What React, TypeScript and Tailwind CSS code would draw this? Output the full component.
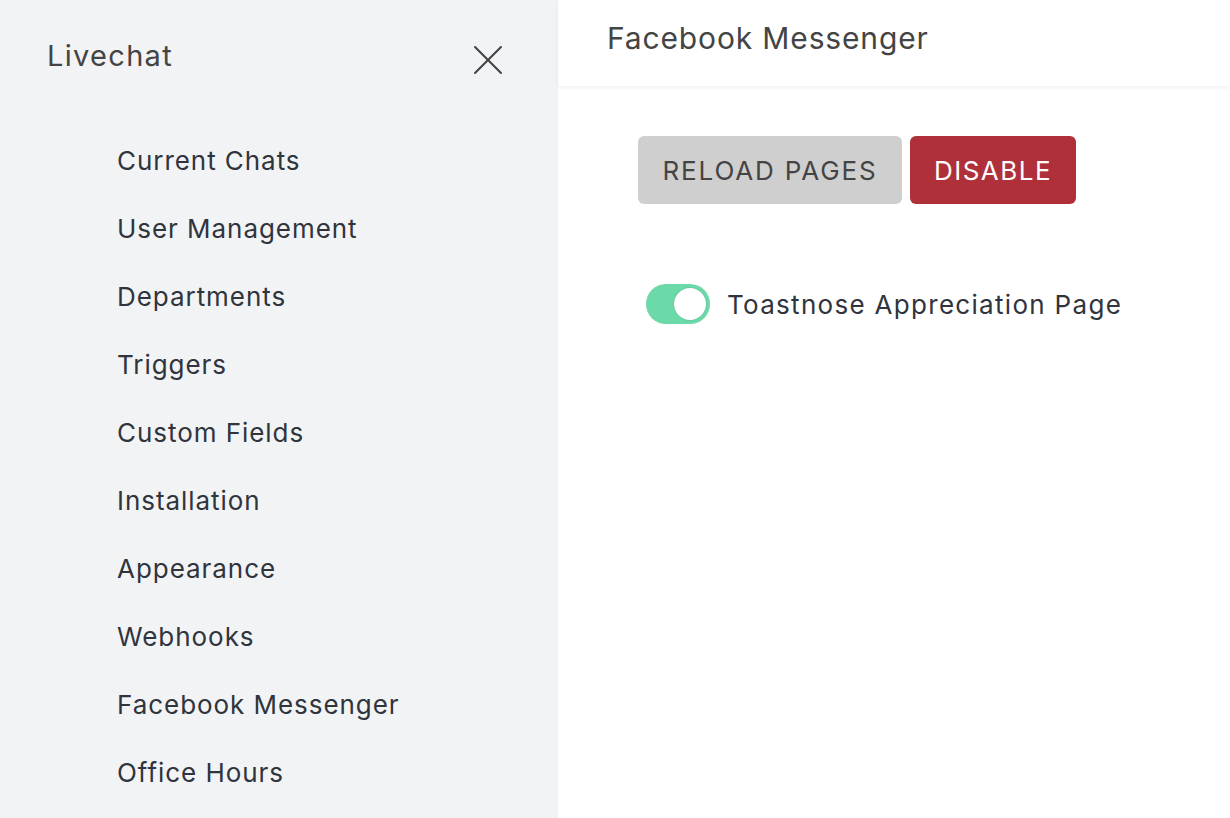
import { X } from 'lucide-react'

const menuItems = [
  'Current Chats',
  'User Management',
  'Departments',
  'Triggers',
  'Custom Fields',
  'Installation',
  'Appearance',
  'Webhooks',
  'Facebook Messenger',
  'Office Hours'
]

export default function App() {
  return (
    <div
      className="flex h-[818px] w-[1230px] overflow-hidden bg-white"
      style={{ fontFamily: 'Inter, "Noto Sans", sans-serif' }}
    >
      {/* SIDEBAR */}
      <aside className="flex w-[558px] shrink-0 flex-col bg-[#f2f3f5]">
        <div className="flex h-[112px] items-center justify-between pl-[47px] pr-[44px]">
          <span className="text-[29px] tracking-[1.3px] text-[#444444]">
            Livechat
          </span>
          <X
            className="mt-[8px] h-[52px] w-[52px] text-[#444444]"
            strokeWidth={0.95}
          />
        </div>

        <nav className="flex flex-col pt-[14px]">
          {menuItems.map((item) => (
            <a
              key={item}
              className="flex h-[68px] items-center pl-[117px] text-[26px] tracking-[0.95px] text-[#2f343d]"
            >
              {item}
            </a>
          ))}
        </nav>
      </aside>

      {/* CONTENT */}
      <main className="flex flex-1 flex-col">
        <header className="flex h-[86px] items-center pb-[10px] pl-[49px] shadow-[0_2px_4px_rgba(0,0,0,0.06)]">
          <h1 className="text-[30px] tracking-[0.85px] text-[#444444]">
            Facebook Messenger
          </h1>
        </header>

        <div className="flex flex-col pl-[80px] pt-[50px]">
          <div className="flex gap-[8px]">
            <button className="h-[68px] w-[264px] rounded-[6px] bg-[#cfcfcf] text-[26px] tracking-[1.85px] text-[#444444]">
              RELOAD PAGES
            </button>
            <button className="h-[68px] w-[166px] rounded-[6px] bg-[#b0303a] text-[26px] tracking-[1.5px] text-white">
              DISABLE
            </button>
          </div>

          <div className="mt-[80px] flex items-center pl-[8px]">
            <div className="flex h-[40px] w-[64px] items-center justify-end rounded-full bg-[#6cd9a8] pr-[4px]">
              <div className="h-[32px] w-[32px] rounded-full bg-white shadow-[0_0_2px_rgba(0,0,0,0.2)]" />
            </div>
            <span className="ml-[17px] text-[26px] tracking-[1.3px] text-[#2f343d]">
              Toastnose Appreciation Page
            </span>
          </div>
        </div>
      </main>
    </div>
  )
}
